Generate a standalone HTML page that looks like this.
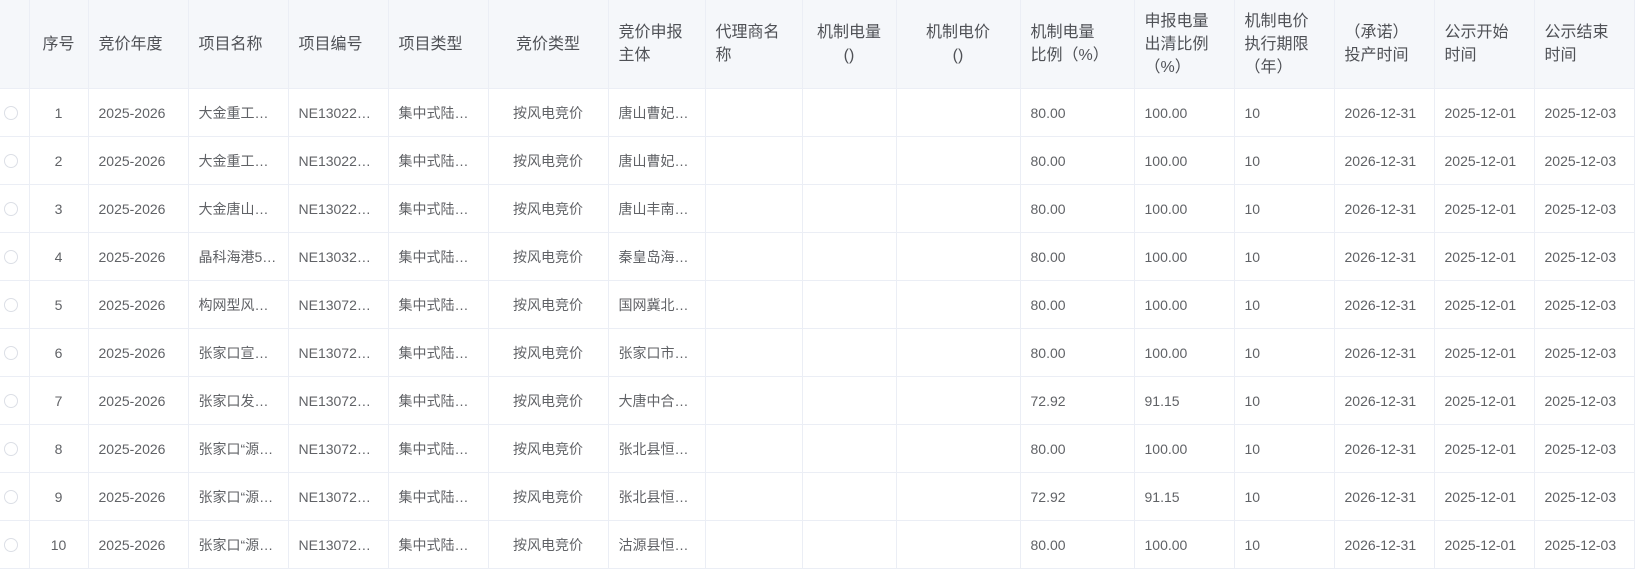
<!DOCTYPE html>
<html><head><meta charset="utf-8"><style>
html,body{margin:0;padding:0;background:#fff;width:1640px;height:580px;overflow:hidden}
table{border-collapse:collapse;table-layout:fixed;width:1634px;font-family:"Liberation Sans","Noto Sans CJK SC",sans-serif;font-size:14px;color:#606266}
th,td{border-right:1px solid #ebeef5;border-bottom:1px solid #ebeef5;padding:0 10px;white-space:nowrap;overflow:hidden;text-align:left}
th{background:#f5f7fa;height:88px;font-weight:normal;font-size:16px;line-height:23px;color:#4f5156;white-space:normal;vertical-align:middle}
td{height:47px}
.c{text-align:center}
th:first-child,td:first-child{padding:0}
.r{display:block;width:14px;height:14px;border:1px solid #dcdfe6;border-radius:50%;margin-left:4px;box-sizing:border-box}
</style></head><body>
<table>
<colgroup><col style="width:29px"><col style="width:59px"><col style="width:100px"><col style="width:100px"><col style="width:100px"><col style="width:100px"><col style="width:120px"><col style="width:97px"><col style="width:97px"><col style="width:94px"><col style="width:124px"><col style="width:114px"><col style="width:100px"><col style="width:100px"><col style="width:100px"><col style="width:100px"><col style="width:100px"></colgroup>
<tr><th></th><th class="c">序号</th><th>竞价年度</th><th>项目名称</th><th>项目编号</th><th>项目类型</th><th class="c">竞价类型</th><th>竞价申报主体</th><th>代理商名称</th><th class="c">机制电量<br>()</th><th class="c">机制电价<br>()</th><th>机制电量<br>比例（%）</th><th>申报电量<br>出清比例<br>（%）</th><th>机制电价<br>执行期限<br>（年）</th><th>（承诺）<br>投产时间</th><th>公示开始<br>时间</th><th>公示结束<br>时间</th></tr>
<tr><td><span class="r"></span></td><td class="c">1</td><td>2025-2026</td><td>大金重工…</td><td>NE13022…</td><td>集中式陆…</td><td class="c">按风电竞价</td><td>唐山曹妃…</td><td></td><td></td><td></td><td>80.00</td><td>100.00</td><td>10</td><td>2026-12-31</td><td>2025-12-01</td><td>2025-12-03</td></tr>
<tr><td><span class="r"></span></td><td class="c">2</td><td>2025-2026</td><td>大金重工…</td><td>NE13022…</td><td>集中式陆…</td><td class="c">按风电竞价</td><td>唐山曹妃…</td><td></td><td></td><td></td><td>80.00</td><td>100.00</td><td>10</td><td>2026-12-31</td><td>2025-12-01</td><td>2025-12-03</td></tr>
<tr><td><span class="r"></span></td><td class="c">3</td><td>2025-2026</td><td>大金唐山…</td><td>NE13022…</td><td>集中式陆…</td><td class="c">按风电竞价</td><td>唐山丰南…</td><td></td><td></td><td></td><td>80.00</td><td>100.00</td><td>10</td><td>2026-12-31</td><td>2025-12-01</td><td>2025-12-03</td></tr>
<tr><td><span class="r"></span></td><td class="c">4</td><td>2025-2026</td><td>晶科海港5…</td><td>NE13032…</td><td>集中式陆…</td><td class="c">按风电竞价</td><td>秦皇岛海…</td><td></td><td></td><td></td><td>80.00</td><td>100.00</td><td>10</td><td>2026-12-31</td><td>2025-12-01</td><td>2025-12-03</td></tr>
<tr><td><span class="r"></span></td><td class="c">5</td><td>2025-2026</td><td>构网型风…</td><td>NE13072…</td><td>集中式陆…</td><td class="c">按风电竞价</td><td>国网冀北…</td><td></td><td></td><td></td><td>80.00</td><td>100.00</td><td>10</td><td>2026-12-31</td><td>2025-12-01</td><td>2025-12-03</td></tr>
<tr><td><span class="r"></span></td><td class="c">6</td><td>2025-2026</td><td>张家口宣…</td><td>NE13072…</td><td>集中式陆…</td><td class="c">按风电竞价</td><td>张家口市…</td><td></td><td></td><td></td><td>80.00</td><td>100.00</td><td>10</td><td>2026-12-31</td><td>2025-12-01</td><td>2025-12-03</td></tr>
<tr><td><span class="r"></span></td><td class="c">7</td><td>2025-2026</td><td>张家口发…</td><td>NE13072…</td><td>集中式陆…</td><td class="c">按风电竞价</td><td>大唐中合…</td><td></td><td></td><td></td><td>72.92</td><td>91.15</td><td>10</td><td>2026-12-31</td><td>2025-12-01</td><td>2025-12-03</td></tr>
<tr><td><span class="r"></span></td><td class="c">8</td><td>2025-2026</td><td>张家口“源…</td><td>NE13072…</td><td>集中式陆…</td><td class="c">按风电竞价</td><td>张北县恒…</td><td></td><td></td><td></td><td>80.00</td><td>100.00</td><td>10</td><td>2026-12-31</td><td>2025-12-01</td><td>2025-12-03</td></tr>
<tr><td><span class="r"></span></td><td class="c">9</td><td>2025-2026</td><td>张家口“源…</td><td>NE13072…</td><td>集中式陆…</td><td class="c">按风电竞价</td><td>张北县恒…</td><td></td><td></td><td></td><td>72.92</td><td>91.15</td><td>10</td><td>2026-12-31</td><td>2025-12-01</td><td>2025-12-03</td></tr>
<tr><td><span class="r"></span></td><td class="c">10</td><td>2025-2026</td><td>张家口“源…</td><td>NE13072…</td><td>集中式陆…</td><td class="c">按风电竞价</td><td>沽源县恒…</td><td></td><td></td><td></td><td>80.00</td><td>100.00</td><td>10</td><td>2026-12-31</td><td>2025-12-01</td><td>2025-12-03</td></tr>
</table>
</body></html>
